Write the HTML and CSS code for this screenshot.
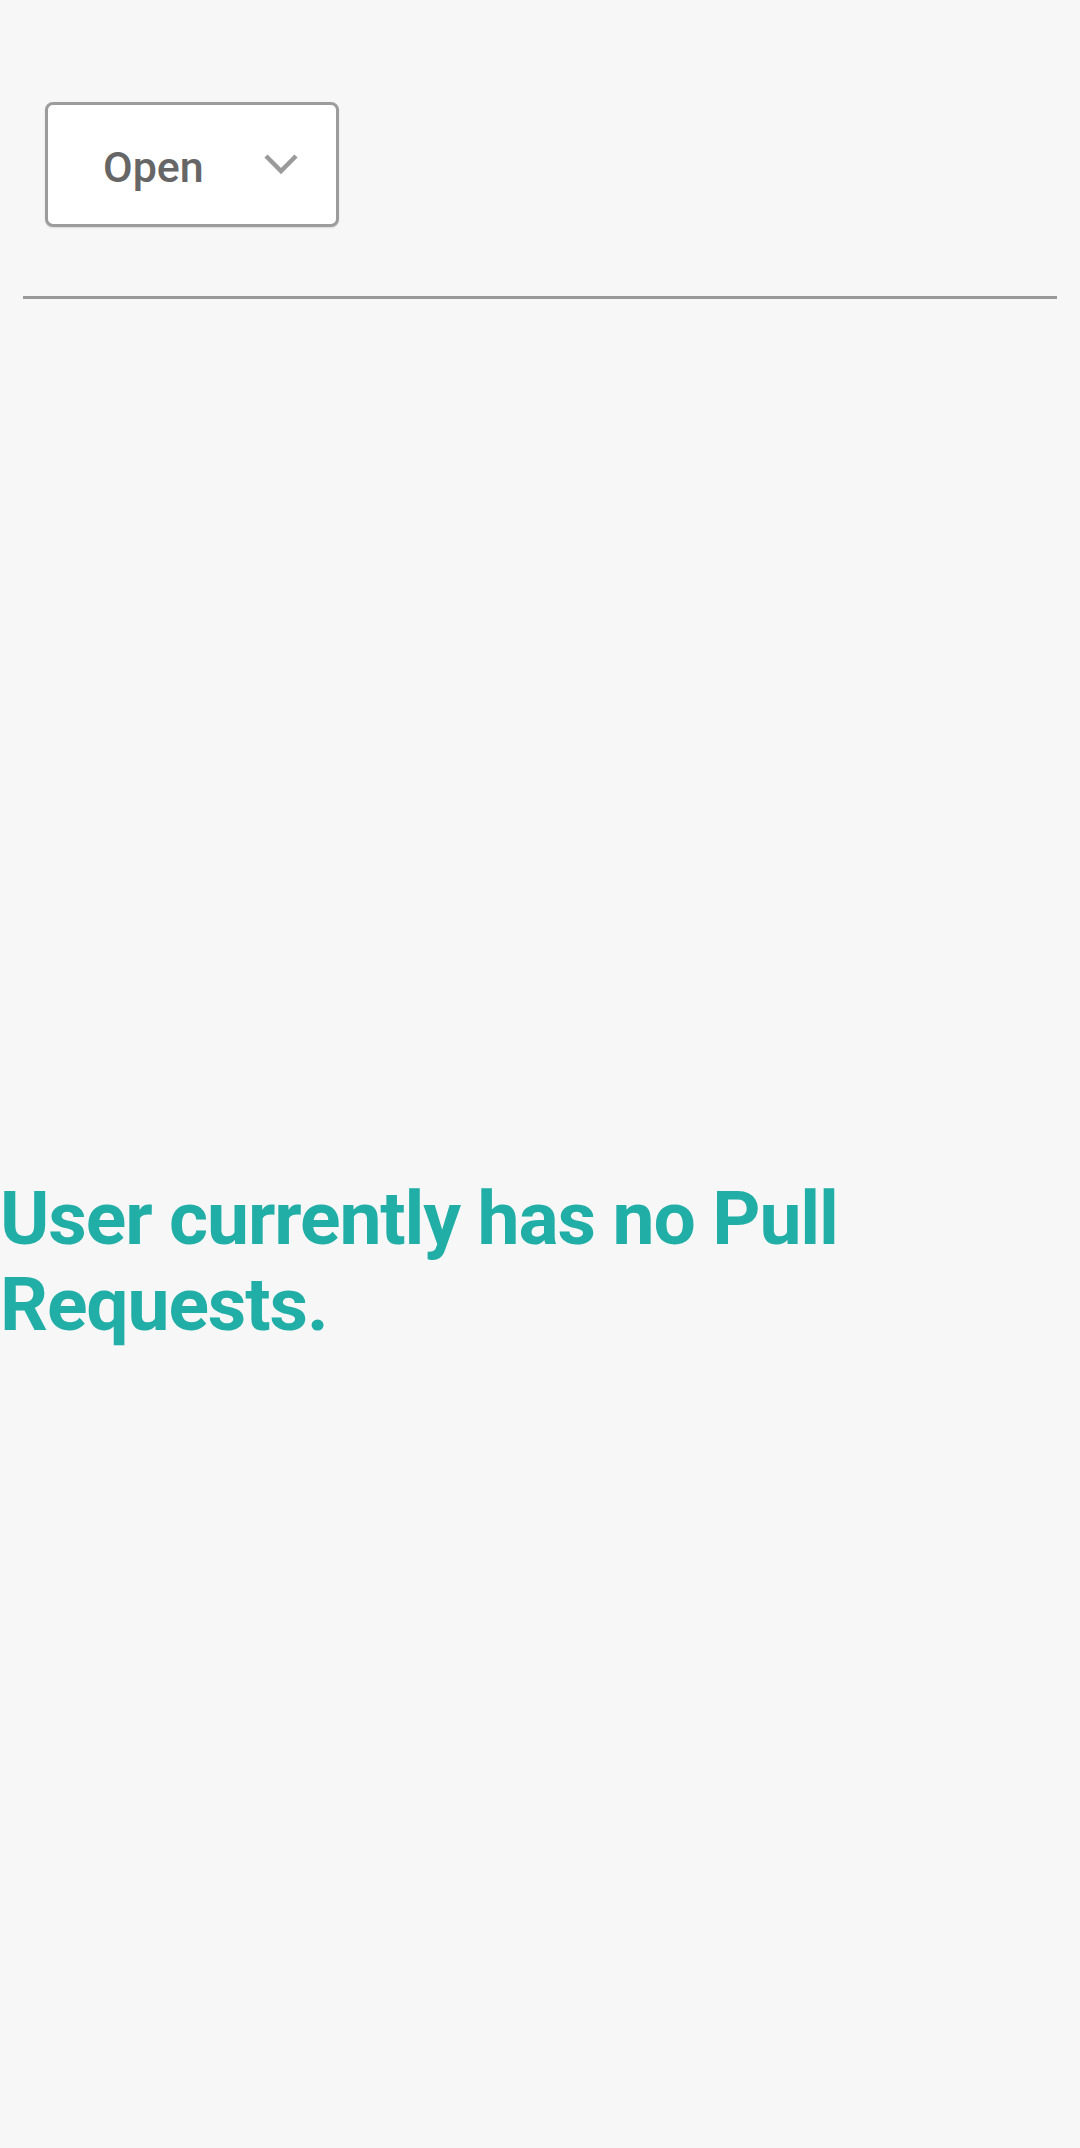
FILE: index.html
```html
<!DOCTYPE html>
<html>
<head>
<meta charset="utf-8">
<link rel="stylesheet" href="styles.css">
</head>
<body>
<div class="page">
  <header class="toolbar">
    <div class="select">
      <span class="select-label">Open</span>
      <svg class="chevron" width="34" height="22" viewBox="0 0 34 22"><path d="M2 3 L17 18 L32 3" fill="none" stroke="#9a9a9a" stroke-width="4.5"/></svg>
    </div>
  </header>
  <hr class="divider">
  <main class="content">
    <p class="empty">User currently has no Pull Requests.</p>
  </main>
</div>
</body>
</html>
```

FILE: styles.css
```css
html, body {
  margin: 0;
  padding: 0;
  background: #f7f7f7;
}
.page {
  width: 1080px;
  height: 2148px;
  font-family: Roboto, "Noto Sans", sans-serif;
}
.toolbar {
  padding: 102px 0 0 45px;
  height: 194px;
  box-sizing: border-box;
}
.select {
  width: 294px;
  height: 125px;
  box-sizing: border-box;
  border: 3px solid #9c9c9c;
  border-radius: 8px;
  background: #ffffff;
  display: flex;
  align-items: center;
  padding: 0 38px 0 55px;
  justify-content: space-between;
  box-shadow: 0 1px 2px rgba(0,0,0,0.12);
}
.select-label {
  font-size: 43px;
  font-weight: 500;
  color: #666666;
  margin-top: 4px;
}
.chevron {
  display: block;
  margin-top: -2px;
}
.divider {
  margin: 102px 23px 0 23px;
  border: none;
  height: 3px;
  background: #999999;
}
.content {
  padding-top: 876px;
}
.empty {
  margin: 0;
  font-size: 75px;
  line-height: 86px;
  letter-spacing: -1.1px;
  font-weight: 700;
  color: #21aea6;
}
```
